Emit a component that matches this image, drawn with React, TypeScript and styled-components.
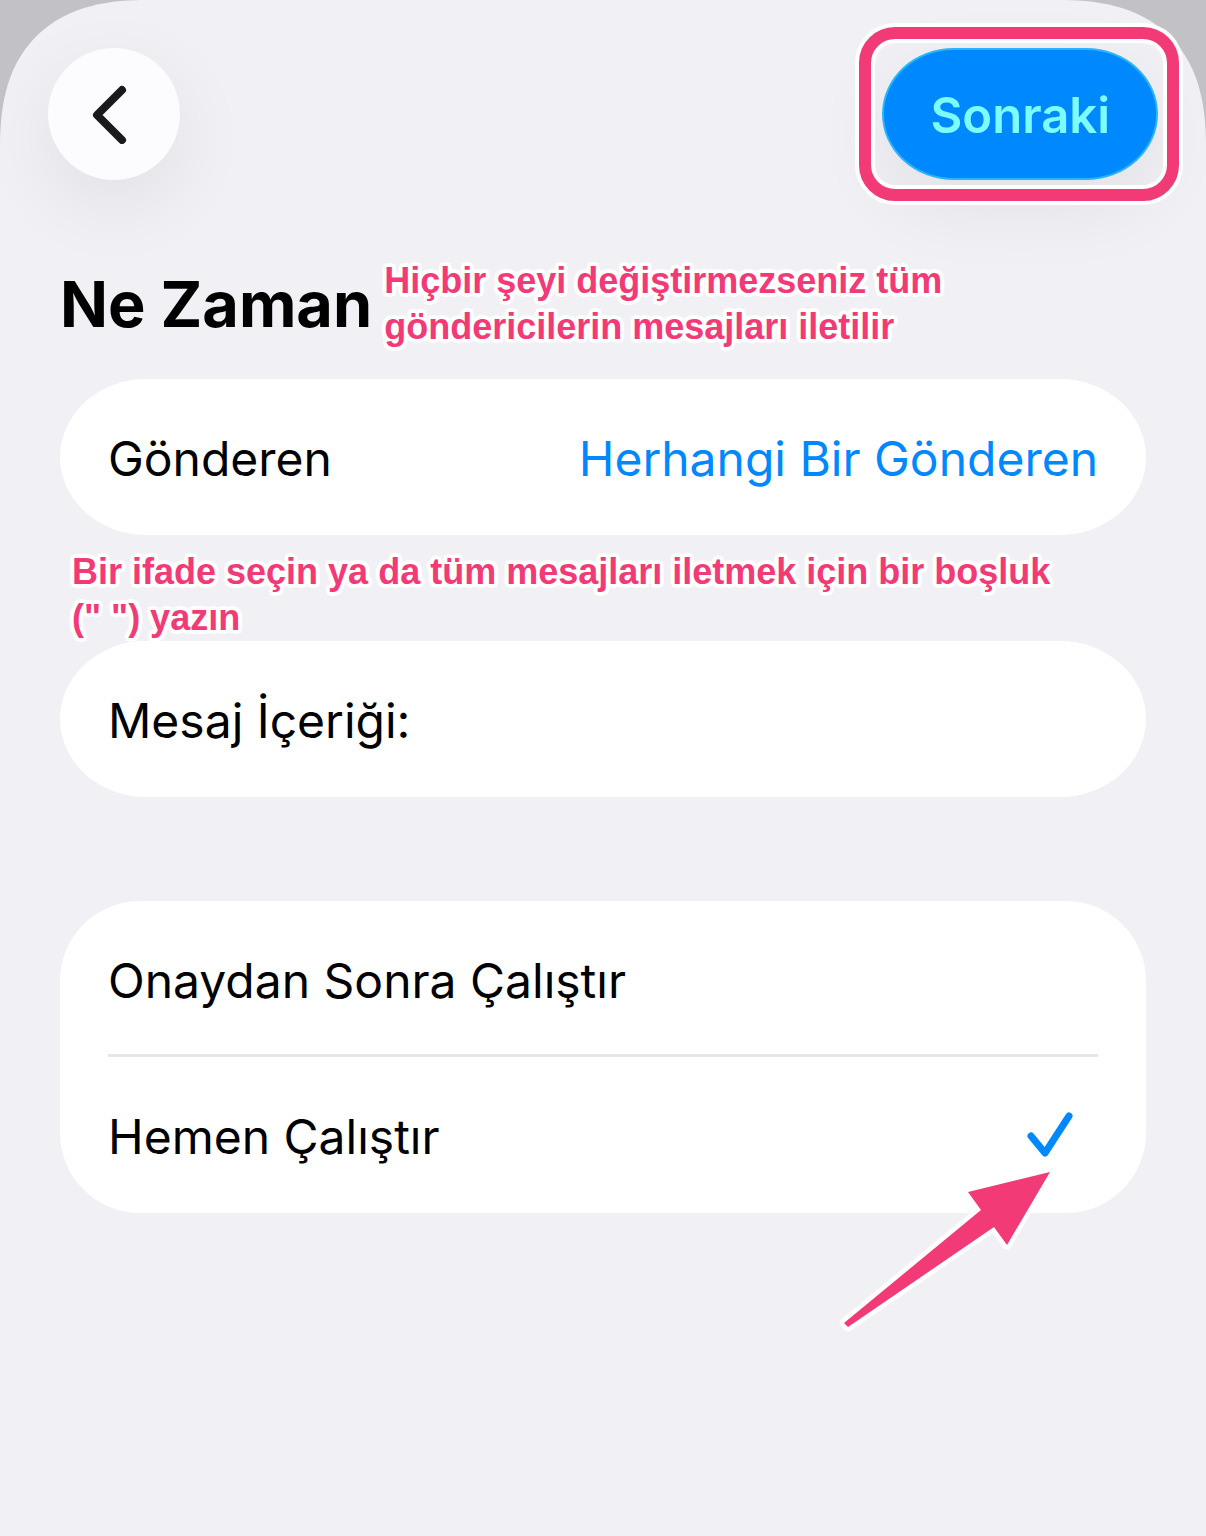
import React, { useState } from "react";
import styled, { createGlobalStyle } from "styled-components";

const pink = "#f23a77";
const blue = "#0088ff";

const GlobalStyle = createGlobalStyle`
  * { box-sizing: border-box; }
  body {
    margin: 0;
    background: #f1f0f5;
    font-family: Inter, "Noto Sans", sans-serif;
    color: #000;
  }
  button, input { font: inherit; color: inherit; }
`;

const Backdrop = styled.div`
  min-height: 100vh;
  background: linear-gradient(#c2c1c6 200px, #f1f0f5 200px);
`;

const Sheet = styled.main`
  min-height: 100vh;
  padding: 48px 0;
  border-radius: 124px 124px 0 0;
  background: #f1f0f5;

  @supports (corner-shape: superellipse(1.3)) {
    border-radius: 148px 148px 0 0;
    corner-shape: superellipse(1.3);
  }
`;

const TopBar = styled.header`
  display: flex;
  justify-content: space-between;
  align-items: center;
  padding: 0 48px;
`;

const BackButton = styled.button`
  display: grid;
  place-items: center;
  width: 132px;
  height: 132px;
  padding: 0;
  border: 0;
  border-radius: 50%;
  background: #fcfcff;
  box-shadow: 0 24px 80px rgba(0, 0, 0, 0.07);
`;

const Highlight = styled.div`
  position: relative;

  &::after {
    content: "";
    position: absolute;
    inset: -21px -21px -21px -23px;
    border: 12px solid ${pink};
    border-radius: 36px;
    box-shadow: 0 0 0 4px #fff, inset 0 0 0 4px #fff;
    pointer-events: none;
  }
`;

const NextButton = styled.button`
  display: block;
  height: 132px;
  padding: 2px 46px 0;
  border: 2px solid #28b4ff;
  border-radius: 72px / 66px;
  background: ${blue};
  box-shadow: 0 24px 80px rgba(0, 0, 0, 0.07);
  color: #7dfcff;
  font-size: 49px;
  font-weight: 600;
`;

const Content = styled.div`
  padding: 78px 60px 0;
`;

const TitleRow = styled.div`
  display: flex;
  align-items: center;
  gap: 12px;
  margin-bottom: 29px;
`;

const Title = styled.h1`
  margin: 0;
  font-size: 63px;
  line-height: 92px;
  font-weight: 700;
  white-space: nowrap;
`;

const Note = styled.p<{ $width: number }>`
  max-width: ${(p) => p.$width}px;
  margin: 0;
  color: ${pink};
  font-family: "Liberation Sans", Arial, sans-serif;
  font-size: 36px;
  font-weight: 700;
  line-height: 46px;
  text-shadow:
    4px 0 1px #fff, -4px 0 1px #fff, 0 4px 1px #fff, 0 -4px 1px #fff,
    3px 3px 1px #fff, -3px 3px 1px #fff, 3px -3px 1px #fff, -3px -3px 1px #fff,
    2px 0 1px #fff, -2px 0 1px #fff, 0 2px 1px #fff, 0 -2px 1px #fff;
`;

const NoteBlock = styled.div`
  position: relative;
  z-index: 1;
  padding: 14px 12px 0;
`;

const Card = styled.section`
  padding: 0 48px;
  border-radius: 86px / 78px;
  background: #fff;
  font-size: 48px;
`;

const Row = styled.div`
  display: flex;
  align-items: center;
  justify-content: space-between;
  gap: 24px;
  height: 156px;
  padding-top: 2px;
`;

const SenderButton = styled.button`
  padding: 0;
  border: 0;
  background: none;
  color: ${blue};
`;

const MessageInput = styled.input`
  flex: 1;
  min-width: 0;
  height: 72px;
  border: 0;
  outline: 0;
  background: none;
`;

const Options = styled(Card)`
  position: relative;
  margin-top: 104px;
  border-radius: 80px;
`;

const Option = styled.label`
  display: flex;
  align-items: center;
  justify-content: space-between;
  height: 156px;
  padding: 2px 24px 0 0;

  &:first-of-type {
    box-shadow: inset 0 -3px #e6e6e6;
  }
`;

const HiddenRadio = styled.input`
  position: absolute;
  opacity: 0;
  pointer-events: none;
`;

const Pointer = styled.svg`
  position: absolute;
  right: 90px;
  bottom: -121px;
  pointer-events: none;
`;

const options = ["Onaydan Sonra Çalıştır", "Hemen Çalıştır"];

export default function App() {
  const [selected, setSelected] = useState(1);

  return (
    <Backdrop lang="tr">
      <GlobalStyle />
      <Sheet>
        <TopBar>
          <BackButton type="button" aria-label="Geri">
            <svg width="60" height="60" viewBox="0 0 60 60" fill="none" stroke="#1a1a1e" strokeWidth="8" strokeLinecap="round" strokeLinejoin="round">
              <path d="M38 6 13 31 38 56" />
            </svg>
          </BackButton>
          <Highlight>
            <NextButton type="button">Sonraki</NextButton>
          </Highlight>
        </TopBar>
        <Content>
          <TitleRow>
            <Title>Ne Zaman</Title>
            <Note $width={600}>Hiçbir şeyi değiştirmezseniz tüm göndericilerin mesajları iletilir</Note>
          </TitleRow>
          <Card>
            <Row>
              <span id="sender">Gönderen</span>
              <SenderButton type="button" aria-describedby="sender">Herhangi Bir Gönderen</SenderButton>
            </Row>
          </Card>
          <NoteBlock>
            <Note $width={1000}>Bir ifade seçin ya da tüm mesajları iletmek için bir boşluk (" ") yazın</Note>
          </NoteBlock>
          <Card>
            <Row>
              <label htmlFor="message">Mesaj İçeriği:</label>
              <MessageInput id="message" type="text" />
            </Row>
          </Card>
          <Options>
            {options.map((text, i) => (
              <Option key={text}>
                <HiddenRadio type="radio" name="run" checked={selected === i} onChange={() => setSelected(i)} />
                <span>{text}</span>
                {selected === i && (
                  <svg width="48" height="48" viewBox="0 0 48 48" fill="none" stroke={blue} strokeWidth="7" strokeLinecap="round" strokeLinejoin="round">
                    <path d="M5 24 19 41 43 4" />
                  </svg>
                )}
              </Option>
            ))}
            <Pointer width="218" height="168" viewBox="838 1166 218 168" aria-hidden="true">
              <path
                d="M1050 1172 968 1192 981 1210 844 1323 848 1327 994 1227 1007 1245Z"
                fill={pink}
                stroke="#fff"
                strokeWidth="9"
                strokeLinejoin="round"
                paintOrder="stroke"
              />
            </Pointer>
          </Options>
        </Content>
      </Sheet>
    </Backdrop>
  );
}
